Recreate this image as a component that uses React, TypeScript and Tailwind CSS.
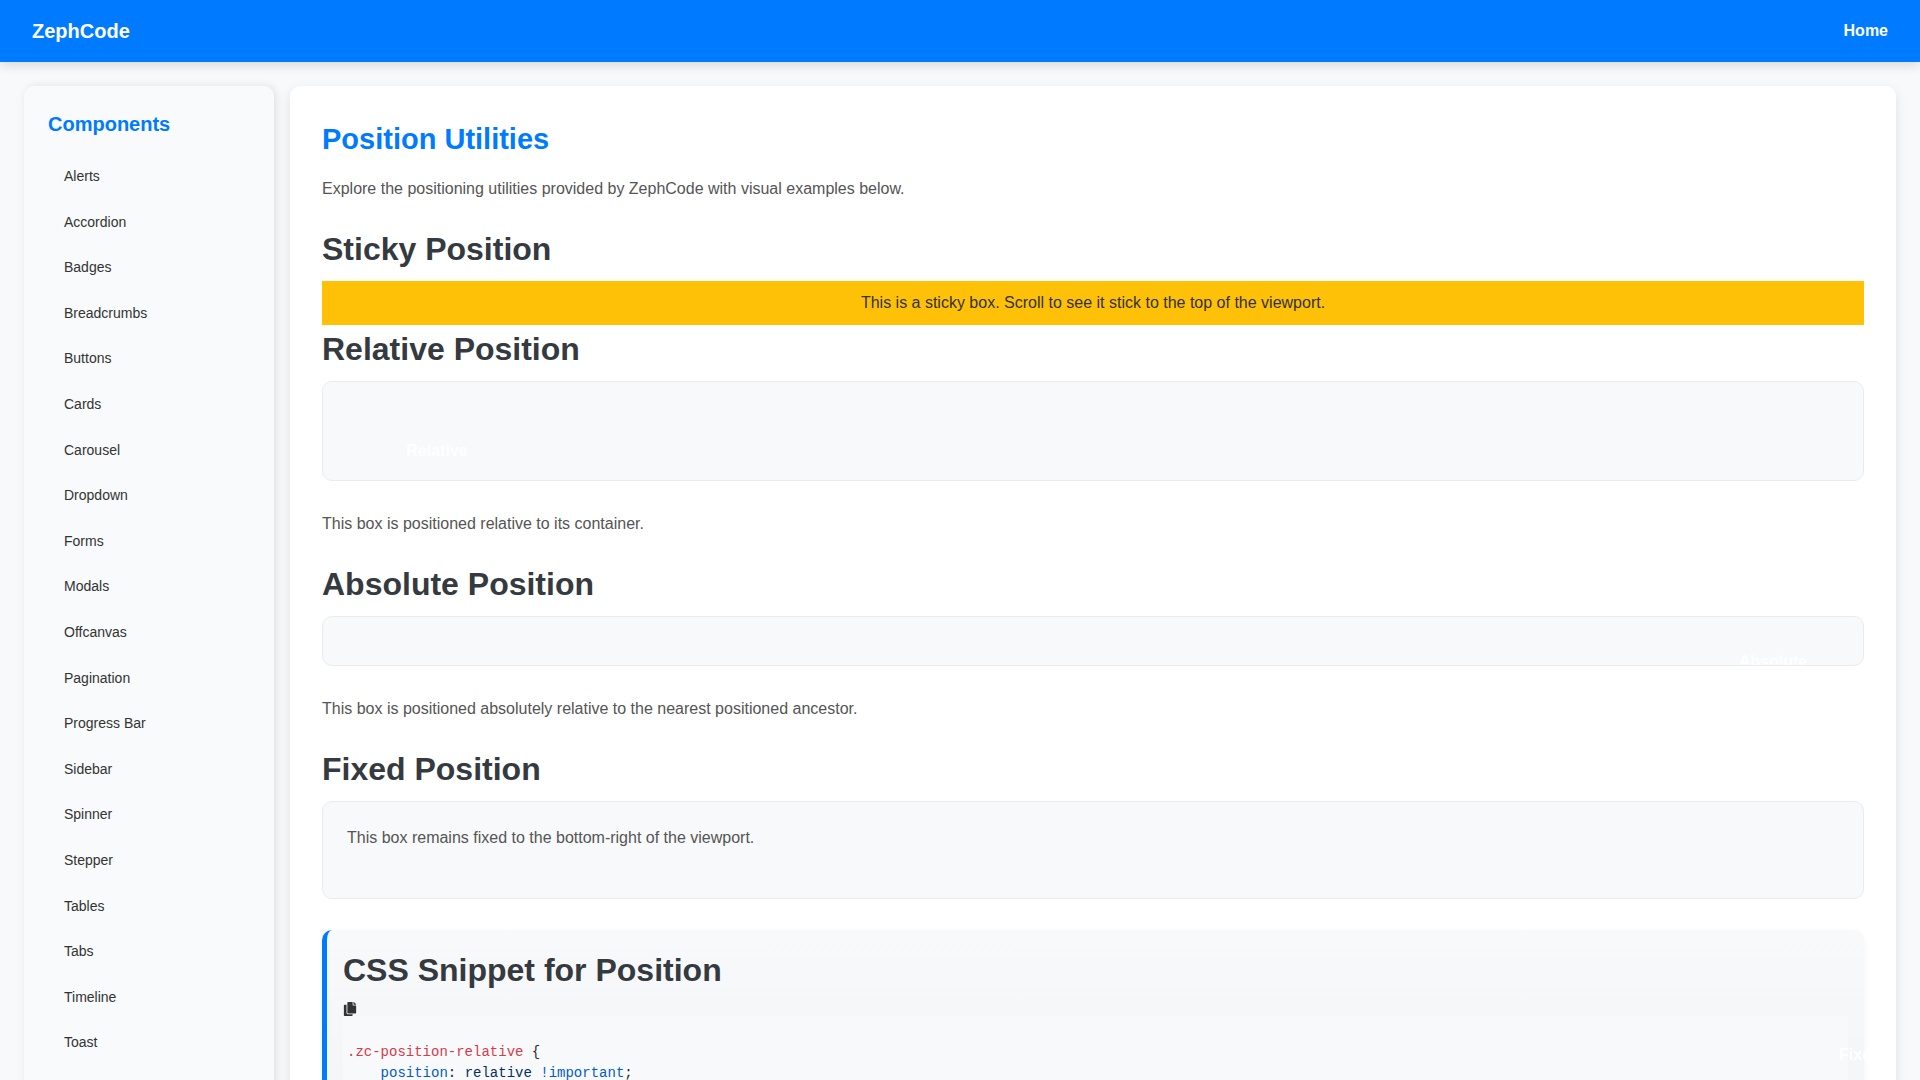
import React from "react";
import { FaCopy } from "react-icons/fa";

const components = [
  "Alerts", "Accordion", "Badges", "Breadcrumbs", "Buttons", "Cards", "Carousel",
  "Dropdown", "Forms", "Modals", "Offcanvas", "Pagination", "Progress Bar",
  "Sidebar", "Spinner", "Stepper", "Tables", "Tabs", "Timeline", "Toast",
];

function Header() {
  return (
    <header className="relative z-10 flex items-center justify-between bg-[#007bff] px-8 py-4 text-white shadow-[0_4px_10px_rgba(0,0,0,0.12)]">
      <div className="text-[20px] leading-[30px] font-bold">ZephCode</div>
      <nav>
        <a href="#home" className="text-[16px] leading-6 font-bold">Home</a>
      </nav>
    </header>
  );
}

function Sidebar() {
  return (
    <aside className="w-[250px] shrink-0 rounded-[10px] bg-[#f8fafb] p-6 shadow-[2px_0_8px_rgba(0,0,0,0.1)]">
      <h2 className="mb-5 text-[20px] leading-7 font-bold text-[#007bff]">Components</h2>
      <ul>
        {components.map((name) => (
          <li key={name} className="mb-2">
            <a href={"#" + name} className="block px-4 py-[9px] text-[14px] leading-[1.4] text-[#333]">
              {name}
            </a>
          </li>
        ))}
      </ul>
    </aside>
  );
}

function SectionTitle({ children }: { children: React.ReactNode }) {
  return <h2 className="mb-2 text-[32px] leading-[48px] font-bold text-[#343a40]">{children}</h2>;
}

function Text({ children }: { children: React.ReactNode }) {
  return <p className="mb-6 text-[16px] leading-6 text-[#555]">{children}</p>;
}

function Demo({ children }: { children: React.ReactNode }) {
  return (
    <div className="relative mb-[31px] overflow-hidden rounded-[10px] border border-[#e9ecef] bg-[#f8f9fb] p-6">
      {children}
    </div>
  );
}

function Snippet() {
  return (
    <section className="rounded-[10px] border-l-[5px] border-[#007bff] bg-linear-to-b from-[#f8f9fa] to-[#edeff1] p-4 shadow-[0_2px_6px_rgba(0,0,0,0.05)]">
      <SectionTitle>CSS Snippet for Position</SectionTitle>
      <button type="button" aria-label="Copy code" className="block text-[14px] text-[#333]">
        <FaCopy />
      </button>
      <pre className="min-h-[320px] bg-[#f8f9fb] px-1 py-[26px] font-['Liberation_Mono',monospace] text-[14px] leading-[21px] text-[#24292e]">
        <code className="block">
          <span className="block">
            <span className="text-[#d73a49]">.zc-position-relative</span>
            {" {"}
          </span>
          <span className="block">
            {"    "}
            <span className="text-[#005cc5]">position</span>:{" "}
            <span className="text-[#032f62]">relative</span>{" "}
            <span className="text-[#005cc5]">!important</span>;
          </span>
        </code>
      </pre>
    </section>
  );
}

export default function App() {
  return (
    <div className="min-h-screen bg-[#f8f9fa] font-['Liberation_Sans',Arial,sans-serif]">
      <Header />
      <div className="flex gap-4 p-6">
        <Sidebar />
        <main className="min-w-0 flex-1 rounded-[10px] bg-white p-8 shadow-[0_4px_12px_rgba(0,0,0,0.1)]">
          <h1 className="mb-4 text-[29px] leading-[43px] font-bold text-[#007bff]">Position Utilities</h1>
          <Text>Explore the positioning utilities provided by ZephCode with visual examples below.</Text>

          <SectionTitle>Sticky Position</SectionTitle>
          <div className="sticky top-0 bg-[#ffc107] p-[10px] text-center text-[16px] leading-6 text-[#333]">
            This is a sticky box. Scroll to see it stick to the top of the viewport.
          </div>

          <SectionTitle>Relative Position</SectionTitle>
          <Demo>
            <div className="relative top-5 left-10 flex h-[50px] w-[100px] items-center justify-center text-[16px] leading-6 font-bold text-white">
              Relative
            </div>
          </Demo>
          <Text>This box is positioned relative to its container.</Text>

          <SectionTitle>Absolute Position</SectionTitle>
          <Demo>
            <div className="absolute top-5 right-10 flex h-[50px] w-[100px] items-center justify-center text-[16px] leading-6 font-bold text-white">
              Absolute
            </div>
          </Demo>
          <Text>This box is positioned absolutely relative to the nearest positioned ancestor.</Text>

          <SectionTitle>Fixed Position</SectionTitle>
          <Demo>
            <Text>This box remains fixed to the bottom-right of the viewport.</Text>
          </Demo>

          <Snippet />
        </main>
      </div>
      <div className="fixed right-[10px] bottom-0 flex h-[50px] w-[100px] items-center justify-center text-[16px] leading-6 font-bold text-white">
        Fixed
      </div>
    </div>
  );
}
